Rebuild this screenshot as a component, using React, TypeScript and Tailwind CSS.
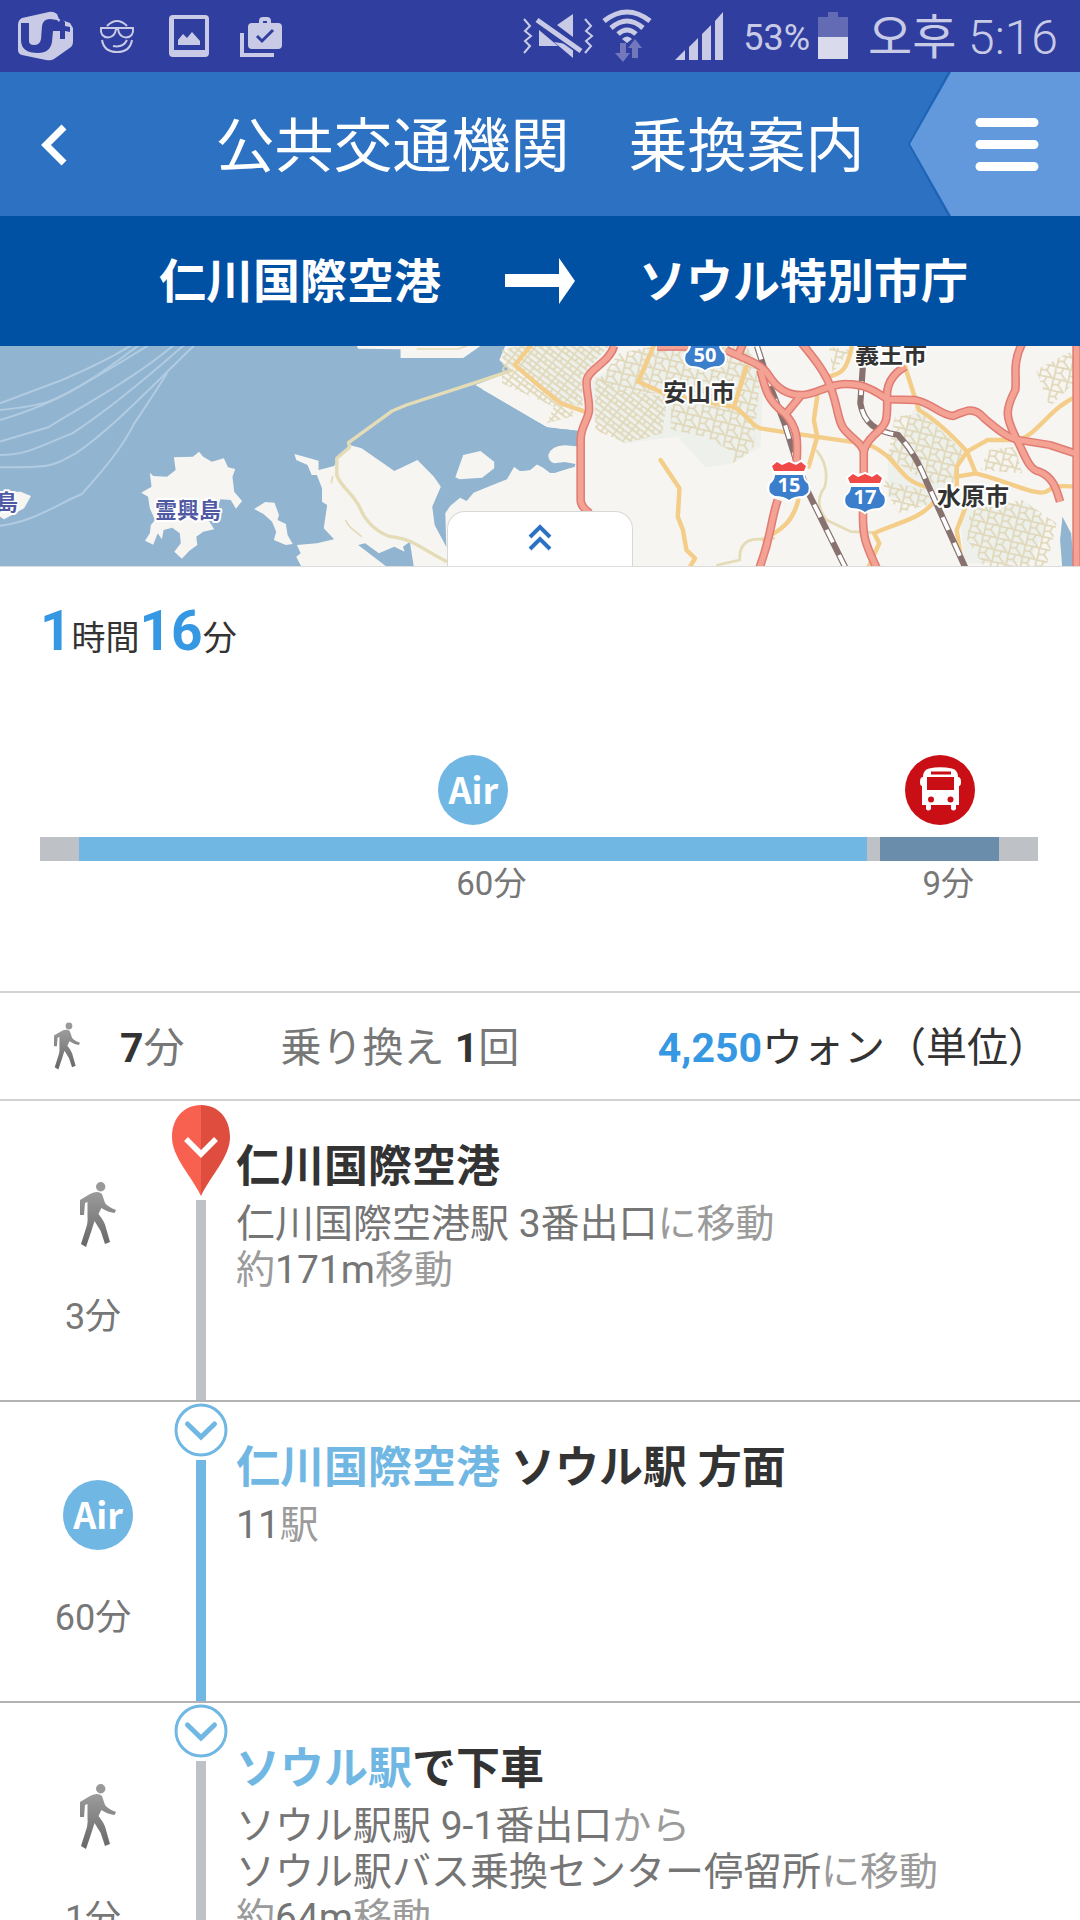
import type { ReactNode } from "react";
import { clsx } from "clsx";

type Segment = {
  kind: "walk" | "air" | "bus";
  minutes: number;
};

type Step = {
  kind: "walk" | "air";
  minutes: number;
  start?: boolean;
  title: ReactNode;
  lines: ReactNode[];
};

const segments: Segment[] = [
  { kind: "walk", minutes: 3 },
  { kind: "air", minutes: 60 },
  { kind: "walk", minutes: 1 },
  { kind: "bus", minutes: 9 },
  { kind: "walk", minutes: 3 },
];

const segmentColors = {
  walk: "bg-[#bec2c7]",
  air: "bg-[#71b7e4]",
  bus: "bg-[#6a8dab]",
};

const steps: Step[] = [
  {
    kind: "walk",
    minutes: 3,
    start: true,
    title: "仁川国際空港",
    lines: [
      <>仁川国際空港駅 3番出口<Dim>に移動</Dim></>,
      <><Dim>約</Dim>171m<Dim>移動</Dim></>,
    ],
  },
  {
    kind: "air",
    minutes: 60,
    title: <><Station>仁川国際空港</Station> ソウル駅 方面</>,
    lines: [<>11<Dim>駅</Dim></>],
  },
  {
    kind: "walk",
    minutes: 1,
    title: <><Station>ソウル駅</Station>で下車</>,
    lines: [
      <>ソウル駅駅 9-1番出口<Dim>から</Dim></>,
      <>ソウル駅バス乗換センター停留所<Dim>に移動</Dim></>,
      <><Dim>約</Dim>64m<Dim>移動</Dim></>,
    ],
  },
];

function Dim({ children }: { children: ReactNode }) {
  return <span className="text-[#9b9b9b]">{children}</span>;
}

function Station({ children }: { children: ReactNode }) {
  return <span className="text-[#71b7e4]">{children}</span>;
}

function StatusBar() {
  return (
    <div className="flex h-[72px] shrink-0 items-center justify-between bg-[#303f9f] pr-[22px] pl-[18px] text-[#c9cbe6]">
      <svg width="266" height="72" viewBox="18 0 266 72" fill="currentColor">
        <path d="M22 18 Q18 20 18 25 V50 Q18 54 22 55 L46 60 Q51 61 54 59 L71 47 Q73 45 73 42 V28 L70 23 L59 19 L57 14 Q53 11 49 12 Z" />
        <path
          d="M21 23 H29 V41 Q29 45 34 45 Q40 45 41 39 L42 26 Q43 19 50 19 L57 20 L59 22 L61 18 L65 22 V26 L70 27 V32 L65 31 V39 H60 V31 H53 L52 42 Q50 53 38 53 Q21 53 21 40 Z"
          fill="#303f9f"
        />
        <g fill="none" stroke="currentColor" strokeWidth="2">
          <path d="M107 26 Q117 16 127 26" />
          <path d="M101 28 H133 Q134 37 126 37.500 Q119 37 118 29 H116 Q115 37 108 37.500 Q100 37 101 28 Z" />
          <path d="M102 40 Q104 52 117 52 Q130 52 132 40" />
          <path d="M113 46 Q123 48 127 40" />
        </g>
        <path
          d="M173 15 H205 Q209 15 209 19 V53 Q209 57 205 57 H173 Q169 57 169 53 V19 Q169 15 173 15 Z M174 19 V50 H205 V19 Z"
          fillRule="evenodd"
        />
        <path d="M178 45 V40 L183 34 L187 38 L192 32 L200 41 V45 Z" />
        <path
          d="M252 23 H259 V21 Q259 17 263 17 H267 Q271 17 271 21 V23 H278 Q282 23 282 27 V45 Q282 49 278 49 H252 Q248 49 248 45 V27 Q248 23 252 23 Z M263 21 V23 H267 V21 Z"
          fillRule="evenodd"
        />
        <path d="M257 36 L262 41 L273 30" fill="none" stroke="#303f9f" strokeWidth="3" />
        <path d="M242 33 V55 H274" fill="none" stroke="currentColor" strokeWidth="4" />
      </svg>
      <div className="flex items-center">
        <svg width="202" height="72" viewBox="525 0 202 72" fill="currentColor">
          <g fill="none" stroke="currentColor" strokeWidth="2">
            <path d="M526 19 L532 26 L527 31 L533 36 L527 41 L532 46 L526 53" />
            <path d="M587 19 L593 26 L588 31 L594 36 L588 41 L593 46 L587 53" />
          </g>
          <path d="M559 25 L575 14 V37 Z M541 30 L560 46 H541 Z M556 42 L575 45 V58 Z" />
          <path d="M539 19 L583 50" fill="none" stroke="#303f9f" strokeWidth="10" />
          <path d="M539 20 L583 51" fill="none" stroke="currentColor" strokeWidth="5" />
          <g fill="none" stroke="currentColor" strokeWidth="5">
            <path d="M606 21 Q629 3 652 21" />
            <path d="M613 28 Q629 14 645 28" />
            <path d="M620 34 Q629 26 638 34" />
          </g>
          <path d="M624 39 Q629 34 634 39 L629 43 Z" />
          <path d="M622 43 H628 V53 H632 L625 62 L617 53 H622 Z M634 58 V48 H630 L637 39 L644 48 H640 V58 Z" fill="#7278bb" />
          <path d="M677 60 L687 50 V60 Z M691 47 L700 38 V60 H691 Z M704 34 L713 25 V60 H704 Z M717 21 L725 12 V60 H717 Z" />
        </svg>
        <span className="mt-1 ml-[18px] text-4xl leading-none">53%</span>
        <svg className="ml-2" width="30" height="72" viewBox="0 0 30 72">
          <path d="M10 12 H20 V17 H30 V37 H0 V17 H10 Z" fill="#646bb5" />
          <rect y="37" width="30" height="22" fill="#d9dbec" />
        </svg>
        <span className="mt-1 ml-5 text-5xl leading-none font-light">
          <span className="font-normal">오후</span> 5:16
        </span>
      </div>
    </div>
  );
}

function Header() {
  return (
    <header className="grid h-36 shrink-0 grid-cols-[1fr_auto_1fr] items-center bg-[#2d71c3] text-white">
      <button type="button" aria-label="戻る" className="w-24 pt-0.5 pl-10">
        <svg width="28" height="44" viewBox="0 0 28 44">
          <path d="M24 4 L6 22 L24 40" fill="none" stroke="currentColor" strokeWidth="7" />
        </svg>
      </button>
      <h1 className="pt-1 text-[59px] leading-none whitespace-nowrap">公共交通機関　乗換案内</h1>
      <button type="button" aria-label="メニュー" className="justify-self-end">
        <svg width="175" height="144" viewBox="0 0 175 144">
          <path d="M3 72 L43 0 H175 V144 H43 Z" fill="#1f63b5" />
          <path d="M5 72 L46 0 H175 V144 H46 Z" fill="#6199dc" />
          <path d="M75 50.500 H129 M75 72.500 H129 M75 94.500 H129" stroke="currentColor" strokeWidth="9" strokeLinecap="round" />
        </svg>
      </button>
    </header>
  );
}

function RouteBar() {
  return (
    <div className="grid h-[130px] shrink-0 grid-cols-[1fr_auto_1fr] items-center gap-16 bg-[#0050a4] text-[47px] leading-none font-bold text-white">
      <span className="text-right">仁川国際空港</span>
      <svg width="70" height="46" viewBox="0 0 70 46" fill="currentColor" role="img" aria-label="から">
        <path d="M0 16 H54 V0 L70 23 L54 46 V29 H0 Z" />
      </svg>
      <span>ソウル特別市庁</span>
    </div>
  );
}

function Shield({ x, y, label }: { x: number; y: number; label: string }) {
  return (
    <g transform={`translate(${x} ${y})`}>
      <path
        d="M-17 -19 L-12 -23 L-7 -20 L0 -23 L7 -20 L12 -23 L17 -19 L15 -14 H-15 Z"
        fill="#f04a48"
        stroke="#fff"
        strokeWidth="4"
        paintOrder="stroke"
      />
      <path
        d="M-14 -10 H14 Q14 -5 19 -1 Q22 8 14 11 Q5 11 0 15 Q-5 11 -14 11 Q-22 8 -19 -1 Q-14 -5 -14 -10 Z"
        fill="#3b7ecb"
        stroke="#fff"
        strokeWidth="4"
        paintOrder="stroke"
      />
      <text y="7" textAnchor="middle" fontSize="20" fontWeight="700" fill="#fff" className="font-['Open_Sans',sans-serif]">
        {label}
      </text>
    </g>
  );
}

const highways = [
  "M215 18 C200 70 135 90 135 125 C135 165 145 180 142 215 C135 250 118 260 118 300 V480 Q118 500 145 520",
  "M540 30 C600 60 640 70 660 100 C690 150 720 165 760 165 C800 165 840 130 890 132 C950 132 980 160 1010 178 L1090 180 C1140 190 1160 225 1200 228 C1240 210 1260 200 1290 235 C1330 270 1360 295 1390 300 L1480 315 L1560 342",
  "M640 90 C655 150 660 180 710 220 C745 260 750 290 745 365",
  "M755 170 L715 220",
  "M690 480 C665 560 675 580 635 690",
  "M760 10 C800 60 830 100 845 145 C865 200 865 250 885 270 C910 300 935 310 940 335 V400",
  "M938 510 C935 600 950 620 980 690",
  "M1060 80 C1010 110 1005 150 1008 180 C1008 240 1010 250 970 285 Q945 310 940 335",
  "M1400 10 C1370 70 1385 110 1380 150 C1350 210 1350 230 1385 300 C1410 350 1420 390 1450 395 C1490 410 1500 450 1510 485",
  "M1558 10 V690",
  "M340 20 H430",
  "M590 10 L575 45",
];

const mainRoads = [
  "M-28 18 L-73 75 L0 140 L60 190 L130 215",
  "M330 18 L285 125 L370 165 L560 200 C600 220 610 255 640 265 L700 275 L800 290 L900 305 C960 310 980 325 1010 350 C1050 390 1060 425 1120 440",
  "M600 80 L565 195",
  "M805 170 L795 240 L805 290 L780 380",
  "M905 20 C890 100 870 100 840 110",
  "M1060 80 L1100 210 C1150 240 1200 290 1240 335 L1265 400 C1350 420 1440 470 1470 455 C1500 430 1530 440 1568 440",
  "M1240 335 L1300 300 L1390 300 C1450 280 1480 200 1568 165",
  "M1240 335 L1210 380 V440 M1210 410 L1265 400",
  "M1140 490 C1100 540 1030 550 970 580 L985 610 L950 690",
  "M1240 490 L1210 570 L1220 640",
  "M350 360 L405 445 L400 530 L415 570 L425 630 L450 655 L430 690",
  "M750 480 C730 560 690 570 650 600",
];

const railways =
  "M630 18 L665 130 L710 250 L740 350 L780 460 L890 690 M940 40 L930 190 C940 250 975 275 1040 285 C1080 330 1100 370 1120 420 L1238 690";

function RouteMap() {
  return (
    <section className="relative h-[221px] shrink-0 overflow-hidden border-b border-[#dcdcdc]">
      <svg
        className="h-full w-full"
        viewBox="0 0 1080 220"
        preserveAspectRatio="xMidYMid slice"
        role="img"
        aria-label="経路地図"
      >
        <defs>
          <pattern id="streets" width="34" height="30" patternUnits="userSpaceOnUse" patternTransform="rotate(38)">
            <path d="M0 2 H34 M2 0 V30 M18 2 V16 M0 17 H34" fill="none" stroke="#e0d7b8" strokeWidth="5" />
          </pattern>
          <pattern id="lanes" width="42" height="36" patternUnits="userSpaceOnUse" patternTransform="rotate(14)">
            <path d="M0 4 L42 2 M4 0 L6 36 M26 3 L22 20 L40 36 M6 22 L23 19" fill="none" stroke="#e0d7b8" strokeWidth="5" />
          </pattern>
        </defs>
        <rect width="1080" height="220" fill="#91b4d1" />
        <g transform="scale(.3444 .3333) translate(0 -18)">
          <g fill="none" stroke="#b1cbe1" strokeWidth="6">
            <path d="M0 190 L180 120 C260 85 330 50 390 10 M0 210 Q100 200 140 185 C230 150 320 80 410 10" />
            <path d="M0 240 Q130 200 220 145 Q340 75 440 10 M0 305 L140 262 C220 210 400 110 510 10" />
            <path d="M0 345 C80 345 110 320 210 280 C300 220 430 110 540 10 M0 382 C150 382 150 380 220 340 C320 270 430 150 565 15" />
            <path d="M485 100 Q430 190 390 250 C340 350 280 410 238 462 C160 495 100 545 0 557" />
          </g>
          <g fill="#f6f5f1">
            <path d="M435 398 L445 408 L485 410 L510 390 L505 352 L560 350 L578 335 L590 350 L615 365 L650 355 L662 382 L683 387 L675 410 L680 455 L703 483 L685 506 L670 480 L640 478 L630 510 L605 540 L622 568 L590 575 L570 590 L573 615 L550 632 L528 656 L506 635 L525 610 L522 580 L500 563 L475 570 L470 598 L458 580 L445 614 L421 602 L435 580 L438 555 L450 540 L435 505 L430 470 L410 458 L440 440 Z" />
            <path d="M0 455 L60 455 L90 468 L70 505 L40 522 L12 538 L0 530 Z" />
            <path d="M738 507 L770 486 L797 488 L810 525 L806 540 L830 552 L835 585 L850 612 L830 615 L795 600 L802 575 L790 545 L765 522 Z" />
            <path d="M1322 412 L1345 345 L1395 333 L1435 365 L1435 385 L1400 413 L1335 418 Z" />
            <path d="M855 342 L925 362 L925 390 L970 378 L985 350 L1015 315 L1050 325 L1145 393 L1212 360 L1260 410 L1280 440 L1255 500 L1262 555 L1298 625 V690 H1203 L1190 605 L1170 620 L1175 635 L1145 620 L1100 640 L1060 610 L1040 615 L1135 690 H880 L860 650 L873 640 L862 615 L920 610 L970 598 L940 565 L950 495 L935 485 L935 445 L920 405 L905 405 L893 375 L860 360 Z" />
            <path d="M1036 18 L1040 26 L1163 28 L1163 54 L1345 54 L1395 18 Z" />
            <path d="M1470 10 L1450 60 L1475 85 L1470 100 L1380 135 L1588 261 L1680 273 L1690 300 L1668 380 L1612 398 L1597 398 L1578 383 L1559 373 L1539 390 L1510 393 L1493 380 L1472 418 L1423 438 L1375 458 L1355 483 L1336 473 L1307 498 L1293 520 L1298 690 H3140 V10 Z" />
          </g>
          <path d="M1568 250 L1588 261 L1680 273 V345 L1668 381 L1625 385 L1612 398 L1597 398 L1578 383 L1559 373 L1539 390 L1510 393 L1493 380 L1440 330 L1460 230 Z" fill="#91b4d1" />
          <path d="M1400 148 L1588 261 L1640 268 L1640 220 L1500 120 Z" fill="#f6f5f1" />
          <path d="M1592 345 Q1600 318 1640 316 L1690 320 V376 L1640 366 L1610 370 Q1592 365 1592 345 Z" fill="#f6f5f1" />
          <path d="M3085 530 L3110 580 L3120 680 L3085 690 L3078 600 Z" fill="#91b4d1" />

          <g fill="none" stroke="#e4dcb6" strokeWidth="10" strokeLinejoin="round">
            <path d="M1490 90 L1380 128 L1180 195 L1140 212 L1012 308 L1015 322 L978 355 V405 C990 445 1030 460 1050 515 C1070 555 1110 590 1150 592 C1200 600 1230 630 1298 665" />
            <path d="M962 430 L966 408 M1003 540 L1015 560 L1050 590 M1210 27 H1330 L1355 18" strokeWidth="5" />
            <path d="M2370 330 Q2410 380 2395 440 Q2360 490 2400 540 L2470 575 L2540 578 M2250 595 L2190 598 Q2145 605 2148 660 L2080 676" strokeWidth="8" />
          </g>

          <g transform="translate(1568 0)">
            <g fill="#edf0eb">
              <path d="M-90 18 H200 L120 110 L120 205 L60 185 L-100 70 Z" />
              <path d="M330 18 H600 L650 100 L640 320 L560 370 L480 382 L400 290 L240 310 L150 230 L150 120 Z" />
              <path d="M1100 180 L1230 335 L1200 430 L1130 500 L1010 470 L1010 340 L1060 260 Z" />
              <path d="M1220 500 L1420 490 L1470 560 L1420 670 H1230 Z" />
            </g>
            <path d="M-110 30 L-60 18 H200 L120 110 L125 200 L60 185 L110 225 L20 250 L40 200 L-110 130 Z M160 110 L230 150 L370 170 L355 280 L250 310 L160 270 Z" fill="url(#streets)" />
            <path d="M230 40 L330 18 H600 L640 100 L620 320 L560 370 L570 210 L360 160 L240 160 L170 120 Z M380 190 L560 200 L620 260 L600 360 L480 290 L380 270 Z M1030 230 L1110 220 L1230 335 L1200 430 L1130 430 L1010 350 Z M990 420 L1120 450 L1140 490 L1040 520 Z M1250 500 L1400 480 L1500 550 L1470 680 H1290 L1240 600 Z M1380 320 L1300 330 L1280 390 L1400 400 Z M840 20 L900 30 L850 100 Z M1440 90 L1550 30 V130 L1480 200 Z" fill="url(#lanes)" />
            <g fill="none" stroke="#f4cd88" strokeWidth="13" strokeLinejoin="round" strokeLinecap="round">
              {mainRoads.map((d) => (
                <path key={d} d={d} />
              ))}
            </g>
            <path d={railways} fill="none" stroke="#87726f" strokeWidth="18" />
            <path d={railways} fill="none" stroke="#fff" strokeWidth="11" strokeDasharray="42 42" />
            <g fill="none" stroke="#e07c74" strokeWidth="25" strokeLinejoin="round">
              {highways.map((d) => (
                <path key={d} d={d} />
              ))}
            </g>
            <g fill="none" stroke="#f4a294" strokeWidth="16" strokeLinejoin="round">
              {highways.map((d) => (
                <path key={d} d={d} />
              ))}
            </g>
          </g>
        </g>
        <Shield x={705} y={9} label="50" />
        <Shield x={789} y={139} label="15" />
        <Shield x={865} y={151} label="17" />
        <g fontWeight="700" stroke="#fff" strokeWidth="4" paintOrder="stroke" strokeLinejoin="round">
          <g fontSize="22" fill="#5059a3">
            <text x="155" y="172">霊興島</text>
            <text x="-4" y="164">島</text>
          </g>
          <g fontSize="24" fill="#333">
            <text x="663" y="55">安山市</text>
            <text x="855" y="17">義王市</text>
            <text x="937" y="159">水原市</text>
          </g>
        </g>
      </svg>
      <button
        type="button"
        aria-label="地図を閉じる"
        className="absolute bottom-0 left-1/2 flex h-[55px] w-[186px] -translate-x-1/2 justify-center rounded-t-[18px] border border-b-0 border-[#d8d8d8] bg-white pt-3 text-[#2d71c3]"
      >
        <svg width="24" height="28" viewBox="0 0 24 28" fill="none" stroke="currentColor" strokeWidth="4">
          <path d="M2 13 L12 3 L22 13 M2 25 L12 15 L22 25" />
        </svg>
      </button>
    </section>
  );
}

function AirIcon() {
  return (
    <span className="flex size-[70px] items-center justify-center rounded-full bg-[#71b7e4] pb-1 font-['Noto_Sans_CJK_JP',sans-serif] text-4xl leading-none font-bold text-white">
      Air
    </span>
  );
}

function BusIcon() {
  return (
    <svg width="70" height="70" viewBox="0 0 70 70" role="img" aria-label="バス">
      <circle cx="35" cy="35" r="35" fill="#c90f15" />
      <path
        d="M18 22 Q18 15 24 13.500 Q35 11 47 13.500 Q53 15 53 22 Q56 22 56 27 Q56 31 54 31 V50 H51 V54 Q48.500 57 46 54 V50 H26 V54 Q23 57 21 54 V50 H17 V31 Q15 31 15 27 Q15 22 18 22 Z"
        fill="#fff"
      />
      <path d="M26 16.500 H46 V19.500 H26 Z M22 22 H49 V35 H22 Z" fill="#c90f15" />
      <circle cx="26" cy="44.500" r="3" fill="#c90f15" />
      <circle cx="45.500" cy="44.500" r="3" fill="#c90f15" />
    </svg>
  );
}

function WalkIcon({ className }: { className: string }) {
  return (
    <svg className={className} viewBox="0 0 36 65" role="img" aria-label="徒歩">
      <defs>
        <linearGradient id="walker" x1="0" y1="0" x2="0" y2="65" gradientUnits="userSpaceOnUse">
          <stop offset="0.2" stopColor="#999" />
          <stop offset="1" stopColor="#666" />
        </linearGradient>
      </defs>
      <g fill="url(#walker)">
        <circle cx="20.700" cy="4.800" r="4.700" />
        <path d="M10 12 Q18 8 22 12 L25 21 Q28 25 36 28 L34.500 31 Q27 30 21.400 26 L18.500 32 Q25 40 26 46 L30 60 L25 62 L20.700 49 L14.500 39 L11.400 49 L6 65 L1 62 L7 43 Q8 38 7.500 33 L7.500 20 L5 21 L4 33 H0 V18 Z" />
      </g>
    </svg>
  );
}

function Timeline() {
  return (
    <section className="h-[424px] shrink-0 pt-8 pr-[42px] pl-10">
      <h2 className="flex items-baseline text-[34px] leading-[64px] text-[#333]">
        <b className="text-[55px] text-[#3698e2]">1</b>時間
        <b className="text-[55px] text-[#3698e2]">16</b>分
      </h2>
      <div className="mt-[85px] flex">
        {segments.map((segment, i) => (
          <div key={i} className="flex min-w-0 basis-0 flex-col items-center" style={{ flexGrow: segment.minutes }}>
            <div className="mb-3 h-[70px]">
              {segment.kind === "air" && <AirIcon />}
              {segment.kind === "bus" && <BusIcon />}
            </div>
            <div className={clsx("h-6 w-full", segmentColors[segment.kind])} />
            {segment.kind !== "walk" && (
              <p className="w-[70px] pl-[18px] text-[33px] leading-[46px] whitespace-nowrap text-[#777]">
                {segment.minutes}分
              </p>
            )}
          </div>
        ))}
      </div>
    </section>
  );
}

function Summary() {
  return (
    <section className="flex h-[110px] shrink-0 items-center border-y-2 border-[#d2d2d2] pr-[31px] pl-[54px] text-[41px] leading-none whitespace-nowrap text-[#777]">
      <WalkIcon className="h-12 w-[26px]" />
      <p className="ml-10 pt-1">
        <b className="text-[#333]">7</b>分
      </p>
      <p className="ml-24 pt-1">
        乗り換え <b className="text-[#333]">1</b>回
      </p>
      <p className="ml-auto pt-1 text-[#333]">
        <b className="text-[#3698e2]">4,250</b>ウォン（単位）
      </p>
    </section>
  );
}

function Pin() {
  return (
    <svg className="mt-1 mb-1 shrink-0" width="60" height="91" viewBox="0 0 60 91">
      <path d="M30 0 C12 0 1 14 1 32 C1 52 20 70 30 91 Z" fill="#f8604f" />
      <path d="M30 0 C48 0 59 14 59 32 C59 52 40 70 30 91 Z" fill="#de4d3e" />
      <path d="M15 34 L30 49 L45 34" fill="none" stroke="#fff" strokeWidth="5.500" />
    </svg>
  );
}

function Badge() {
  return (
    <svg className="mt-px mb-[3px] shrink-0" width="54" height="54" viewBox="0 0 54 54" fill="none" stroke="#71b7e4">
      <circle cx="27" cy="27" r="25" strokeWidth="3" />
      <path d="M13.500 21 L27 34 L40.500 21" strokeWidth="5" strokeLinecap="round" />
    </svg>
  );
}

function StepRow({ step }: { step: Step }) {
  return (
    <li className="flex min-h-[301px] border-b-2 border-[#b3b3b3]">
      <div className="flex w-[171px] shrink-0 flex-col items-center pt-[78px] pl-[15px] text-4xl leading-none text-[#777]">
        <div className="flex h-[70px] items-center pl-2.5">
          {step.kind === "air" ? <AirIcon /> : <WalkIcon className="h-[65px] w-9" />}
        </div>
        <p className="mt-12 leading-10">{step.minutes}分</p>
      </div>
      <div className="flex w-[60px] shrink-0 flex-col items-center">
        {step.start ? <Pin /> : <Badge />}
        <div className={clsx("w-2.5 grow", segmentColors[step.kind])} />
      </div>
      <div className="min-w-0 grow pt-[37px] pl-[5px] text-[39px] leading-[46px] text-[#757575]">
        <h3 className="mb-[5px] text-[44px] leading-[58px] font-bold text-[#333]">{step.title}</h3>
        {step.lines.map((line, i) => (
          <p key={i}>{line}</p>
        ))}
      </div>
    </li>
  );
}

export default function App() {
  return (
    <div
      lang="ja"
      className="flex h-screen flex-col overflow-hidden bg-white font-['Roboto','Noto_Sans_CJK_JP','Noto_Sans_CJK_KR',sans-serif]"
    >
      <StatusBar />
      <Header />
      <RouteBar />
      <RouteMap />
      <Timeline />
      <Summary />
      <ol className="min-h-0 grow overflow-y-auto [scrollbar-width:none]">
        {steps.map((step, i) => (
          <StepRow key={i} step={step} />
        ))}
      </ol>
    </div>
  );
}
